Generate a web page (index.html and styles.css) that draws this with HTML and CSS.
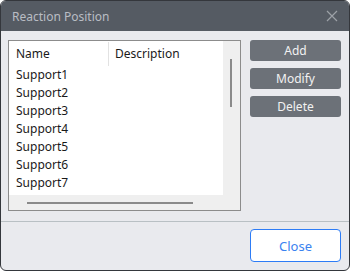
FILE: index.html
```html
<!DOCTYPE html>
<html>
<head>
<meta charset="utf-8">
<link rel="stylesheet" href="styles.css">
</head>
<body>
<div class="dialog">
  <div class="titlebar">
    <span class="title">Reaction Position</span>
    <svg class="close-x" width="12" height="12" viewBox="0 0 12 12"><path d="M1 1L11 11M11 1L1 11" stroke="#9ca1a7" stroke-width="1.2" fill="none"/></svg>
  </div>
  <div class="main">
    <div class="listbox">
      <div class="content">
        <div class="header">
          <div class="col name">Name</div>
          <div class="col desc">Description</div>
        </div>
        <div class="row">Support1</div>
        <div class="row">Support2</div>
        <div class="row">Support3</div>
        <div class="row">Support4</div>
        <div class="row">Support5</div>
        <div class="row">Support6</div>
        <div class="row">Support7</div>
      </div>
      <div class="vscroll"><div class="vthumb"></div></div>
      <div class="hscroll"><div class="hthumb"></div></div>
    </div>
    <div class="buttons">
      <button class="btn">Add</button>
      <button class="btn">Modify</button>
      <button class="btn">Delete</button>
    </div>
  </div>
  <div class="footer">
    <button class="close-btn">Close</button>
  </div>
</div>
</body>
</html>
```
FILE: styles.css
```css
html, body { margin: 0; padding: 0; background: #ffffff; }
body { font-family: "Noto Sans", "Open Sans", sans-serif; }
.dialog {
  width: 350px; height: 271px; box-sizing: border-box;
  border: 1px solid #34373c; border-radius: 6px; overflow: hidden;
  background: #e9eaee; display: flex; flex-direction: column;
}
.titlebar {
  height: 30px; background: #555b63; display: flex; align-items: center;
  justify-content: space-between; padding: 0 11px 0 11px; flex-shrink: 0;
}
.title { color: #b9bdc3; font-size: 12px; }
.close-x { display: block; }
.main {
  display: flex; padding: 9px 8px 0 7px; gap: 9px; height: 191px; box-sizing: border-box;
  border-bottom: 1px solid #b9c0c4;
}
.listbox {
  width: 233px; height: 171px; box-sizing: border-box; border: 1px solid #8c8c8c;
  background: #efefef; display: grid; grid-template-columns: 214px 17px; grid-template-rows: 154px 15px;
}
.content { background: #ffffff; overflow: hidden; }
.header { display: flex; height: 25px; align-items: center; }
.col { font-size: 12px; color: #1a1a1a; height: 24px; line-height: 24px; margin-top: 1px; box-sizing: border-box; }
.name { width: 100px; padding-left: 7px; border-right: 1px solid #e2e2e2; }
.desc { padding-left: 6px; }
.row { height: 18px; line-height: 18px; font-size: 12px; color: #1a1a1a; padding-left: 7px; }
.vscroll { position: relative; }
.vthumb { width: 2px; height: 48px; background: #8a8a8a; margin: 18px 0 0 7px; }
.hscroll { grid-column: 1 / 3; }
.hthumb { width: 166px; height: 2px; background: #8a8a8a; margin: 7px 0 0 18px; }
.buttons { display: flex; flex-direction: column; gap: 7px; }
.btn {
  width: 91px; height: 21px; border: none; border-radius: 3px; background: #6c7178;
  color: #f2f2f2; font-family: inherit; font-size: 12px; padding: 0; line-height: 21px;
}
.footer { display: flex; justify-content: flex-end; padding: 7px 8px 0 0; }
.close-btn {
  width: 91px; height: 33px; box-sizing: border-box; border: 1px solid #2d7cf6; border-radius: 4px;
  background: #ffffff; color: #3a82f0; font-family: inherit; font-size: 13px; padding: 0;
}
```
